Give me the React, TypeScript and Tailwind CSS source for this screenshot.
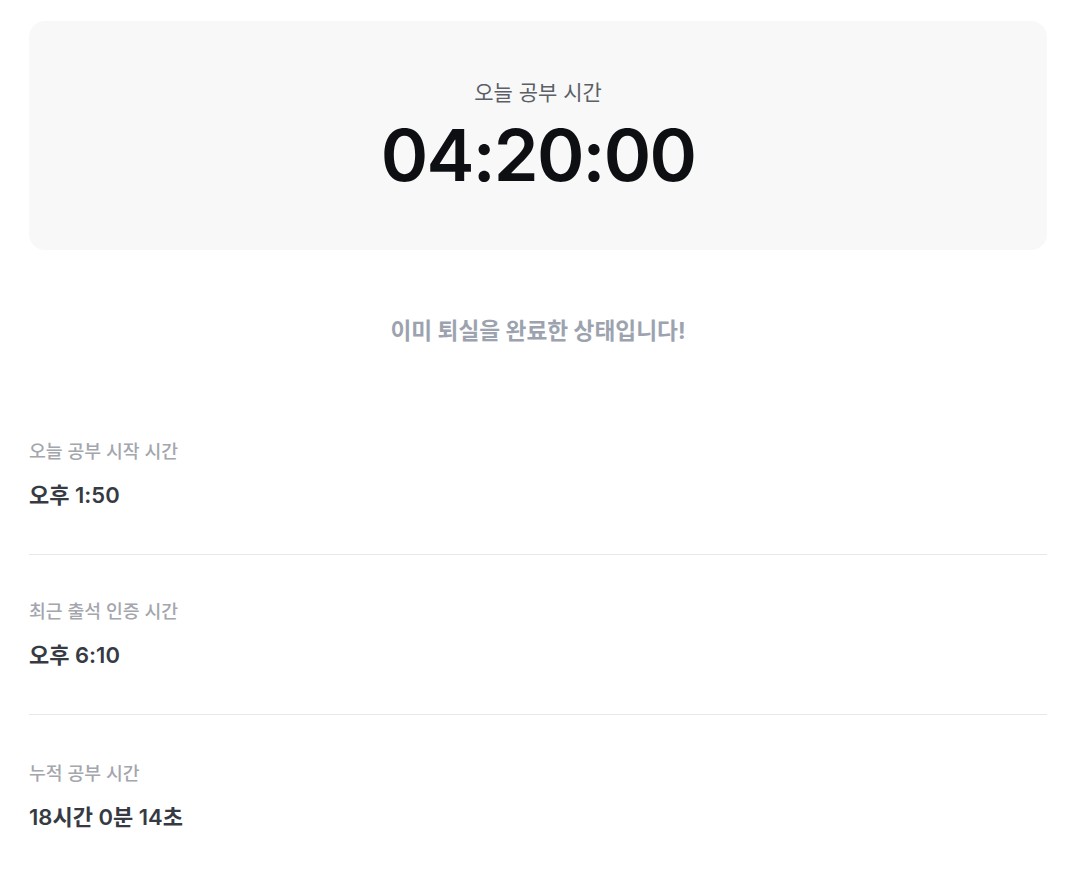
import React from "react";

const rows = [
  { label: "오늘 공부 시작 시간", value: "오후 1:50" },
  { label: "최근 출석 인증 시간", value: "오후 6:10" },
  { label: "누적 공부 시간", value: "18시간 0분 14초" },
];

export default function App() {
  return (
    <div
      className="min-h-screen bg-white pl-[29px] pr-[21px] pt-[21px]"
      style={{ fontFamily: 'Inter, "Noto Sans CJK KR", "Noto Sans", sans-serif' }}
    >
      <div className="flex flex-col items-center rounded-2xl bg-[#f8f8f8] pt-[58px] pb-[59px]">
        <div className="text-[21px] leading-[28px] text-[#5b5f66]">오늘 공부 시간</div>
        <div className="mt-[12px] text-[72px] leading-[72px] font-semibold tracking-[-0.025em] text-[#0e0f12]">
          04:20:00
        </div>
      </div>

      <div className="mt-[67px] text-center text-[22.7px] leading-[28px] font-bold text-[#9ca3af]">
        이미 퇴실을 완료한 상태입니다!
      </div>

      <div className="mt-[50px] flex flex-col">
        {rows.map((r, i) => (
          <div
            key={r.label}
            className={
              i < rows.length - 1
                ? "border-b border-[#e5e7eb] pt-[44px] pb-[45px]"
                : "pt-[46px] pb-[45px]"
            }
          >
            <div className="text-[18.3px] leading-[24px] font-medium text-[#a3a6ad]">{r.label}</div>
            <div className="mt-[18px] text-[22px] leading-[28px] font-semibold text-[#363a43]">
              {r.value}
            </div>
          </div>
        ))}
      </div>
    </div>
  );
}
